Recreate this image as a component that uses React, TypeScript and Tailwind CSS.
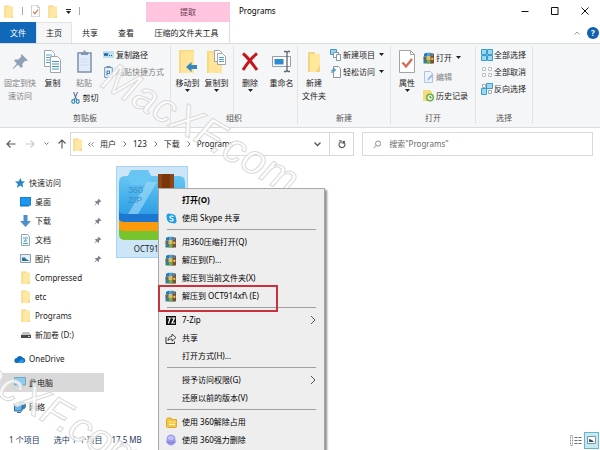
import React from "react";

const crumbs = ["用户", "123", "下载", "Programs"];

function Folder({ className = "w-[10px] h-[13px]" }: { className?: string }) {
  return (
    <svg viewBox="0 0 10 13" className={className} aria-hidden="true">
      <path d="M.5 0.500h5v1.200H9V13H.5z" fill="#f1d681" />
      <path d="M2 1.700h7V13H2z" fill="#ffe8a3" />
      <path d="M.5 0.500L2 1.700V13l-1.500-.8z" fill="#f9dd8c" />
      <path d="M9 9v4H6.500z" fill="#f6d987" />
    </svg>
  );
}

function Books() {
  return (
    <svg viewBox="0 0 12 12" className="w-3 h-3 shrink-0" aria-hidden="true">
      <path d="M1 2l3-1.200h4V4.500H1z" fill="#4aa3d6" />
      <path d="M1 2l3-1.200v3.700H1z" fill="#2d76ab" />
      <path d="M0.500 4.500h8V8h-8z" fill="#e3c04f" />
      <path d="M0.500 4.500h3V8h-3z" fill="#4a6a86" />
      <path d="M0.500 8h8v3.500h-8z" fill="#3c7f8c" />
      <path d="M4 8h4.500v3.500H4z" fill="#7fa84a" />
      <path d="M7.500 1l3.500.8v9.700H7.500z" fill="#77503a" />
      <path d="M8.500 1.200l1.300.3v2.500H8.500z" fill="#4aa3d6" />
      <path d="M8.300 5.800h2v2h-2z" fill="#f0cf63" />
    </svg>
  );
}

function Pin({ className = "w-2 h-2", color = "#7d868f" }: { className?: string; color?: string }) {
  return (
    <svg viewBox="0 0 16 16" className={className} aria-hidden="true">
      <path d="M9 1l6 6-1.6.6-1-.3-2.600 2.800.2 2.900-1.400 1-3-3L1 15l-.5-.5L4.500 10 2 7.300l1-1.200 3 .1L8.700 3.600 8.400 2.500z" fill={color} />
    </svg>
  );
}

function Arrow() {
  return (
    <svg viewBox="0 0 5 3" className="w-[5px] h-[3px] shrink-0" aria-hidden="true">
      <path d="M0 0h5L2.500 3z" fill="#222" />
    </svg>
  );
}

function CheckDoc({ className }: { className: string }) {
  return (
    <svg viewBox="0 0 16 23" className={className} aria-hidden="true">
      <path d="M.5.5h11l4 4v18H.5z" fill="#fff" stroke="#a3a3a3" />
      <path d="M11.500.5v4h4" fill="none" stroke="#a3a3a3" />
      <path d="M3.500 12.500l3.500 4L13 9" fill="none" stroke="#d8684f" strokeWidth="2.200" />
    </svg>
  );
}

function Group({ label, children }: { label: string; children: React.ReactNode }) {
  return (
    <section className="flex flex-col justify-between border-r border-[#e2e3e4] mt-[2px] mb-[3px]">
      <div className="flex">{children}</div>
      <h2 className="text-center leading-3 text-[#555]">{label}</h2>
    </section>
  );
}

function Big({
  icon,
  lines,
  arrow,
  muted,
  className = "w-[29px]",
}: {
  icon: React.ReactNode;
  lines: string[];
  arrow?: boolean;
  muted?: boolean;
  className?: string;
}) {
  return (
    <button className={`flex flex-col items-center ${muted ? "text-[#808080]" : ""} ${className}`}>
      <span className="flex h-[27px] items-center justify-center mt-[2px] mb-[1px]">{icon}</span>
      {lines.map((l) => (
        <span key={l} className="leading-[13px] whitespace-nowrap">{l}</span>
      ))}
      {arrow && <Arrow />}
    </button>
  );
}

function Small({
  icon,
  text,
  arrow,
  muted,
}: {
  icon: React.ReactNode;
  text: string;
  arrow?: boolean;
  muted?: boolean;
}) {
  return (
    <button className={`flex items-center gap-[2px] h-[17px] whitespace-nowrap ${muted ? "text-[#808080]" : ""}`}>
      <span className="flex w-[11px] justify-center">{icon}</span>
      {text}
      {arrow && <span className="ml-[2px]"><Arrow /></span>}
    </button>
  );
}

function Side({
  icon,
  text,
  pin,
  level = 1,
  active,
}: {
  icon: React.ReactNode;
  text: string;
  pin?: boolean;
  level?: number;
  active?: boolean;
}) {
  return (
    <a
      href="#"
      className={`flex items-center gap-1 h-[19px] w-[104px] pr-[2px] ${level === 1 ? "pl-[14px]" : "pl-5"} ${active ? "bg-[#d9d9d9]" : ""}`}
    >
      <span className="flex w-[11px] justify-center">{icon}</span>
      <span className="grow">{text}</span>
      {pin && <Pin />}
    </a>
  );
}

function Item({
  icon,
  text,
  sub,
  bold,
  boxed,
}: {
  icon?: React.ReactNode;
  text: string;
  sub?: boolean;
  bold?: boolean;
  boxed?: boolean;
}) {
  return (
    <button role="menuitem" className={`relative flex items-center w-full h-[18px] pl-[6px] pr-2 text-left text-black ${bold ? "font-bold" : ""}`}>
      <span className="flex w-3 mr-[5px] justify-center">{icon}</span>
      <span className="grow">{text}</span>
      {sub && (
        <svg viewBox="0 0 6 10" className="w-[6px] h-[10px]" aria-hidden="true">
          <path d="M1 1l4 4-4 4" fill="none" stroke="#555" />
        </svg>
      )}
      {boxed && <span className="absolute -left-px -top-[2px] w-[120px] h-[27px] border-2 border-[#c8323c]" />}
    </button>
  );
}

function Line() {
  return <hr className="mx-2 my-[2px] border-t border-[#a0a0a0] h-[2px]" />;
}

function Watermark({ className }: { className: string }) {
  return (
    <div
      aria-hidden="true"
      className={`absolute pointer-events-none origin-left rotate-[30deg] font-['Liberation_Sans'] italic text-[42px] leading-none text-white/80 [-webkit-text-stroke:1px_#dadada] ${className}`}
    >
      MacXF.com
    </div>
  );
}

export default function App() {
  return (
    <div className="relative flex flex-col h-screen overflow-hidden bg-white text-[8px] leading-3 text-[#222] font-['Noto_Sans','Noto_Sans_CJK_SC',sans-serif]">
      <header className="flex h-[22px] shrink-0">
        <div className="flex items-center w-[146px] pl-1 gap-2">
          <Folder />
          <span className="w-px h-2 bg-[#aaa]" />
          <CheckDoc className="w-[9px] h-3" />
          <Folder />
          <span className="flex flex-col items-center gap-px">
            <span className="w-[5px] h-px bg-[#222]" />
            <Arrow />
          </span>
          <span className="w-px h-2 bg-[#aaa]" />
        </div>
        <div className="w-[84px] mt-[2px] pt-1 text-center bg-[#ffc5de] text-[#6d3550]">提取</div>
        <h1 className="grow pl-[9px] pt-[5px] text-black">Programs</h1>
        <div className="flex items-center gap-[22px] pr-[11px]">
          <button aria-label="最小化">
            <svg viewBox="0 0 8 8" className="w-2 h-2"><path d="M.5 4.500h7" stroke="#111" /></svg>
          </button>
          <button aria-label="最大化">
            <svg viewBox="0 0 8 8" className="w-2 h-2"><path d="M.5.5h6.500v7H.5z" fill="none" stroke="#111" /></svg>
          </button>
          <button aria-label="关闭">
            <svg viewBox="0 0 8 8" className="w-2 h-2"><path d="M.5.5l7 7M7.500.5l-7 7" stroke="#111" /></svg>
          </button>
        </div>
      </header>

      <nav className="flex h-[21px] shrink-0 items-stretch text-center">
        <button className="w-9 bg-[#1168b8] text-white">文件</button>
        <button className="w-9 bg-[#f5f6f7] border border-b-0 border-[#e2e3e4]">主页</button>
        <button className="w-9">共享</button>
        <button className="w-9">查看</button>
        <button className="w-[86px] border-r border-[#e8d5dd]">压缩的文件夹工具</button>
        <div className="flex grow items-center justify-end gap-[7px] pr-[1px]">
          <svg viewBox="0 0 6 4" className="w-[6px] h-1" aria-hidden="true">
            <path d="M.5 3.500L3 1l2.500 2.500" fill="none" stroke="#999" />
          </svg>
          <button aria-label="帮助" className="w-3 h-3 rounded-full bg-[#1061b0] text-white font-bold leading-3">?</button>
        </div>
      </nav>

      <div className="flex h-[85px] shrink-0 bg-[#f5f6f7] border-y border-[#dadbdc]">
        <Group label="剪贴板">
          <Big muted className="w-9 ml-[2px]" lines={["固定到快", "速访问"]} icon={<Pin className="w-[17px] h-[19px]" color="#8fa0b8" />} />
          <Big
            lines={["复制"]}
            icon={
              <svg viewBox="0 0 17 23" className="w-[17px] h-[23px]">
                <path d="M.5.5h7l3 3v13H.5z" fill="#fff" stroke="#9aa5ae" />
                <path d="M2 5h6M2 7.500h7M2 10h7M2 12.500h7" stroke="#58a7cc" />
                <path d="M6.500 6.500h7l3 3v13h-10z" fill="#fff" stroke="#9aa5ae" />
                <path d="M8 11.500h7M8 14h7M8 16.500h7M8 19h7" stroke="#3f95c2" />
              </svg>
            }
          />
          <div className="flex flex-col items-center w-[34px]">
            <Big
              muted
              lines={["粘贴"]}
              icon={
                <svg viewBox="0 0 15 23" className="w-[15px] h-[23px]">
                  <path d="M1 3h13v19H1z" fill="#e1ebfa" stroke="#7a93b3" strokeWidth="1.500" />
                  <path d="M4 2h2.500V.5h2V2H11v3H4z" fill="#8296af" />
                  <path d="M3.500 9h8M3.500 12h8M3.500 15h8" stroke="#cddcf0" />
                </svg>
              }
            />
            <Small
              text="剪切"
              icon={
                <svg viewBox="0 0 9 12" className="w-[9px] h-3">
                  <path d="M2.500 0l3.200 8M6.500 0L3.300 8" stroke="#60788e" strokeWidth="1.100" />
                  <ellipse cx="2.300" cy="9.500" rx="1.500" ry="1.800" fill="none" stroke="#2b88bd" strokeWidth="1.200" />
                  <ellipse cx="6.700" cy="9.500" rx="1.500" ry="1.800" fill="none" stroke="#2b88bd" strokeWidth="1.200" />
                </svg>
              }
            />
          </div>
          <div className="flex flex-col pl-[2px] pr-[6px]">
            <Small
              text="复制路径"
              icon={
                <svg viewBox="0 0 11 7" className="w-[11px] h-[7px]">
                  <path d="M0 0h11v7H0z" fill="#bfe0f2" />
                  <path d="M1 2l1 3 1-3 1 3 1-3" fill="none" stroke="#19679b" />
                  <path d="M6 4.500h1M8 4.500h1" stroke="#19679b" />
                </svg>
              }
            />
            <Small
              muted
              text="粘贴快捷方式"
              icon={
                <svg viewBox="0 0 9 12" className="w-[9px] h-3">
                  <path d="M.7 1.500h7.600v10H.7z" fill="#e8f1fa" stroke="#7195b8" />
                  <path d="M2.500 0h4v2h-4z" fill="#7195b8" />
                  <path d="M3 9.500V5h2.500v2.500H3" fill="none" stroke="#3d7fb4" />
                </svg>
              }
            />
          </div>
        </Group>

        <Group label="组织">
          <Big
            arrow
            className="w-[29px] ml-[2px]"
            lines={["移动到"]}
            icon={
              <svg viewBox="0 0 19 23" className="w-[19px] h-[23px]">
                <path d="M1 0h15v23H1z" fill="#f6da80" />
                <path d="M3 1.500h13V23H3z" fill="#ffe49a" />
                <path d="M8 17l5.500-5v3H19v4h-5.500v3z" fill="#3487bf" />
              </svg>
            }
          />
          <Big
            arrow
            lines={["复制到"]}
            icon={
              <svg viewBox="0 0 19 23" className="w-[19px] h-[23px]">
                <path d="M0 1h15v22H0z" fill="#f6da80" />
                <path d="M2 2.500h13V23H2z" fill="#ffe49a" />
                <path d="M7.500.5h5l2 2v9h-7z" fill="#fff" stroke="#9aa5ae" />
                <path d="M10.500 3.500h5l3 3v8h-8z" fill="#fff" stroke="#9aa5ae" />
                <path d="M12 7.500h5M12 9.500h5M12 11.500h5" stroke="#4b9dca" />
              </svg>
            }
          />
          <span className="w-px h-[74px] -mb-4 ml-[2px] bg-[#e2e3e4]" />
          <Big
            arrow
            className="w-8"
            lines={["删除"]}
            icon={
              <svg viewBox="0 0 18 20" className="w-[18px] h-5">
                <path d="M2 1.500c5 4 9 9.500 14 16.500M16 1.500C10 6 6 11.500 2 18" fill="none" stroke="#c4161c" strokeWidth="3" />
              </svg>
            }
          />
          <Big
            className="w-[31px]"
            lines={["重命名"]}
            icon={
              <svg viewBox="0 0 19 23" className="w-[19px] h-[23px]">
                <path d="M.5 6.500h18v10H.5z" fill="#fff" stroke="#8fa0ad" />
                <path d="M2.500 9h9v5.500h-9z" fill="#2f8bd0" />
                <path d="M12 1.500h2l1 1 1-1h2M15 2.500v18M12 21.500h2l1-1 1 1h2" fill="none" stroke="#5a6670" strokeWidth="1.300" />
              </svg>
            }
          />
        </Group>

        <Group label="新建">
          <Big
            className="w-8"
            lines={["新建", "文件夹"]}
            icon={
              <svg viewBox="0 0 12 20" className="w-3 h-5">
                <path d="M0 0h7v2h5v18H0z" fill="#f1d681" />
                <path d="M2 2h10v18H2z" fill="#ffe79c" />
                <path d="M8 20l4-7v7z" fill="#f3d37a" />
              </svg>
            }
          />
          <div className="flex flex-col pr-[6px]">
            <Small
              arrow
              text="新建项目"
              icon={
                <svg viewBox="0 0 11 12" className="w-[11px] h-3">
                  <path d="M.5.5h6v5h-6z" fill="#9bd0ee" stroke="#4694c0" />
                  <path d="M3.500 3.500h5v5h-5z" fill="#fff" stroke="#7d97a8" />
                  <path d="M6.500 5.500h4v6h-4z" fill="#fff" stroke="#8795a0" />
                </svg>
              }
            />
            <Small
              arrow
              text="轻松访问"
              icon={
                <svg viewBox="0 0 10 12" className="w-[10px] h-3">
                  <path d="M2.500.5h5l2 2v9h-7z" fill="#fff" stroke="#8795a0" />
                  <path d="M1 7V4h3M3 2.500L4.700 4 3 5.500" fill="none" stroke="#2f86bd" />
                </svg>
              }
            />
          </div>
        </Group>

        <Group label="打开">
          <Big arrow className="w-8" lines={["属性"]} icon={<CheckDoc className="w-4 h-[23px]" />} />
          <div className="flex flex-col gap-[2px] pt-[3px] pr-[7px]">
            <Small arrow text="打开" icon={<Books />} />
            <Small
              muted
              text="编辑"
              icon={
                <svg viewBox="0 0 10 12" className="w-[10px] h-3">
                  <path d="M.5.5h6l2 2v9h-8z" fill="#edf4fb" stroke="#b3c3d3" />
                  <path d="M3 10l1-3 4-4 1.500 1.500-4 4z" fill="#9dbede" />
                </svg>
              }
            />
            <Small
              text="历史记录"
              icon={
                <svg viewBox="0 0 11 12" className="w-[11px] h-3">
                  <path d="M0 0h7l2 2v9H0z" fill="#f3dc7c" />
                  <circle cx="7" cy="7.500" r="4" fill="#6dae45" />
                  <circle cx="7" cy="7.500" r="2.500" fill="#eef7e6" />
                  <path d="M7 6v1.700h1.500" fill="none" stroke="#3b7a22" />
                </svg>
              }
            />
          </div>
        </Group>

        <Group label="选择">
          <div className="flex flex-col pl-[5px] pr-[6px]">
            <Small
              text="全部选择"
              icon={
                <svg viewBox="0 0 12 12" className="w-3 h-3 shrink-0">
                  <path d="M.5.5h5v5h-5zM6.500.5h5v5h-5zM.5 6.500h5v5h-5zM6.500 6.500h5v5h-5z" fill="#9ad8f4" stroke="#3b9dcb" />
                </svg>
              }
            />
            <Small
              text="全部取消"
              icon={
                <svg viewBox="0 0 12 12" className="w-3 h-3 shrink-0">
                  <path d="M1.500 1.500h3v3h-3zM7.500 1.500h3v3h-3zM1.500 7.500h3v3h-3zM7.500 7.500h3v3h-3z" fill="#fff" stroke="#a5adb3" strokeDasharray="2 1" />
                </svg>
              }
            />
            <Small
              text="反向选择"
              icon={
                <svg viewBox="0 0 12 12" className="w-3 h-3 shrink-0">
                  <path d="M1.500 1.500h3v3h-3zM7.500 7.500h3v3h-3z" fill="#fff" stroke="#a5adb3" />
                  <path d="M5.500.5h6v5h-6zM.5 5.500h5v6h-5z" fill="#9ad8f4" stroke="#3b9dcb" />
                </svg>
              }
            />
          </div>
        </Group>
      </div>

      <div className="flex shrink-0 items-center pt-1 pb-2 pr-[7px] pl-[6px]">
        <div className="flex items-center gap-[9px] w-16">
          <button aria-label="后退">
            <svg viewBox="0 0 10 8" className="w-[10px] h-2"><path d="M4.500.5L1 4l3.500 3.500M1 4h8.500" fill="none" stroke="#555" strokeWidth="1.100" /></svg>
          </button>
          <button aria-label="前进">
            <svg viewBox="0 0 10 8" className="w-[10px] h-2"><path d="M5.500.5L9 4 5.500 7.500M9 4H.5" fill="none" stroke="#ccc" strokeWidth="1.200" /></svg>
          </button>
          <button aria-label="最近">
            <svg viewBox="0 0 5 4" className="w-[5px] h-1"><path d="M.5.5l2 2 2-2" fill="none" stroke="#777" /></svg>
          </button>
          <button aria-label="上移">
            <svg viewBox="0 0 8 10" className="w-2 h-[10px]"><path d="M.5 4.500L4 1l3.500 3.500M4 1v8.500" fill="none" stroke="#555" strokeWidth="1.100" /></svg>
          </button>
        </div>
        <div className="flex items-center h-6 basis-[284px] grow border border-[#d9d9d9] pl-[2px]">
          <Folder />
          <svg viewBox="0 0 6 5" className="w-[6px] h-[5px] ml-[5px]" aria-hidden="true">
            <path d="M2.500.5l-2 2 2 2M5.500.5l-2 2 2 2" fill="none" stroke="#666" strokeWidth=".8" />
          </svg>
          {crumbs.map((c, i) => (
            <span key={c} className="flex items-center">
              {i > 0 && (
                <svg viewBox="0 0 4 6" className="w-1 h-[6px] ml-[7px]" aria-hidden="true">
                  <path d="M.5.5L3 3 .5 5.500" fill="none" stroke="#777" />
                </svg>
              )}
              <a href="#" className="ml-[6px]">{c}</a>
            </span>
          ))}
          <span className="grow" />
          <button aria-label="历史" className="px-2">
            <svg viewBox="0 0 7 5" className="w-[7px] h-[5px]"><path d="M.5.5l3 3 3-3" fill="none" stroke="#555" strokeWidth="1.300" /></svg>
          </button>
          <button aria-label="刷新" className="flex items-center justify-center w-6 h-full border-l border-[#d9d9d9]">
            <svg viewBox="0 0 8 9" className="w-2 h-[9px]">
              <path d="M2 2.300a3 3 0 1 0 3.500-.3M1 .8h2v2.500M5 4V1.500h2" fill="none" stroke="#555" strokeWidth="1.100" />
            </svg>
          </button>
        </div>
        <label className="flex items-center h-6 basis-[231px] grow ml-2 pl-[10px] gap-2 border border-[#d9d9d9]">
          <svg viewBox="0 0 9 9" className="w-[9px] h-[9px]" aria-hidden="true">
            <circle cx="5.500" cy="3.500" r="2.800" fill="none" stroke="#888" />
            <path d="M3.500 5.500L.5 8.500" stroke="#888" />
          </svg>
          <input aria-label="搜索" className="w-full outline-none placeholder:text-[#6b6b6b]" placeholder={'搜索"Programs"'} />
        </label>
      </div>

      <main className="flex grow min-h-0">
        <nav className="w-[116px] shrink-0 pt-[9px]">
          <Side
            text="快速访问"
            icon={
              <svg viewBox="0 0 10 10" className="w-[10px] h-[10px]">
                <path d="M5.500 0l1.200 3.300 3.300.3-2.500 2.200.7 3.700L5.300 7.600 2 10l.8-3.900L0 3.600l3.700-.3z" fill="#2a86c6" />
              </svg>
            }
          />
          <Side
            level={2}
            pin
            text="桌面"
            icon={
              <svg viewBox="0 0 11 10" className="w-[11px] h-[10px]">
                <path d="M0 0h11v8.500H9.500L9 9.500H0z" fill="#1979cf" />
                <path d="M.8.8h9.400v7H.8z" fill="#1b98f0" />
              </svg>
            }
          />
          <Side
            level={2}
            pin
            text="下载"
            icon={
              <svg viewBox="0 0 11 12" className="w-[11px] h-3"><path d="M3.500 0h4v6H11l-5.500 6L0 6h3.500z" fill="#4a8fc8" /></svg>
            }
          />
          <Side
            level={2}
            pin
            text="文档"
            icon={
              <svg viewBox="0 0 9 12" className="w-[9px] h-3">
                <path d="M.5.5h6l2 2v9h-8z" fill="#f3f9fc" stroke="#92a6b3" />
                <path d="M2 4h5M2 9.500h5M3 8l2-3M5 8V6" stroke="#4d9cc5" />
              </svg>
            }
          />
          <Side
            level={2}
            pin
            text="图片"
            icon={
              <svg viewBox="0 0 11 9" className="w-[11px] h-[9px]">
                <path d="M.5.5h10v8H.5z" fill="#e2f2fb" stroke="#8da0ae" />
                <path d="M2 3.500h3l1 1.500 3.500 2H2z" fill="#336d93" />
              </svg>
            }
          />
          <Side level={2} text="Compressed" icon={<Folder />} />
          <Side level={2} text="etc" icon={<Folder />} />
          <Side level={2} text="Programs" icon={<Folder />} />
          <Side
            level={2}
            text="新加卷 (D:)"
            icon={
              <svg viewBox="0 0 10 6" className="w-[10px] h-[6px]">
                <path d="M2 0h6l2 3H0z" fill="#c4c4c4" />
                <path d="M0 3h10v3H0z" fill="#4b4b4b" />
                <path d="M7 4.500h2" stroke="#9fe39f" />
              </svg>
            }
          />
          <div className="flex flex-col gap-[5px] mt-[5px]">
            <Side
              text="OneDrive"
              icon={
                <svg viewBox="0 0 12 8" className="w-3 h-2 shrink-0">
                  <path d="M3 8a2.500 2.500 0 0 1-.3-5A3.500 3.500 0 0 1 9 2.800 2.700 2.700 0 0 1 9.500 8z" fill="#0f6cbd" />
                  <path d="M3 8l5-4a2.700 2.700 0 0 1 1.500 4z" fill="#2a9ae6" />
                </svg>
              }
            />
            <Side
              active
              text="此电脑"
              icon={
                <svg viewBox="0 0 12 11" className="w-3 h-[11px] shrink-0">
                  <path d="M.5.5h11v7.500H.5z" fill="#8ccbee" stroke="#76a7c2" />
                  <path d="M4 10h5" stroke="#5b88a3" strokeWidth="1.500" />
                </svg>
              }
            />
            <Side
              text="网络"
              icon={
                <svg viewBox="0 0 12 12" className="w-3 h-3 shrink-0">
                  <circle cx="8" cy="4.500" r="4" fill="#357fb6" />
                  <path d="M.5 4h7.500v6H.5z" fill="#65b5e8" stroke="#2f6d9f" />
                  <path d="M3 11.500h4" stroke="#2f6d9f" />
                </svg>
              }
            />
          </div>
        </nav>

        <section className="grow pt-[2px]">
          <figure className="flex flex-col items-center w-[72px] h-[92px] pt-[3px] bg-[#cde6f7] border border-[#a6d4f2]">
            <svg viewBox="0 0 66 70" className="w-[66px] h-[70px]" aria-hidden="true">
              <defs>
                <linearGradient id="lid" x1="0" y1="0" x2="0" y2="1">
                  <stop offset="0" stopColor="#6fcdf6" />
                  <stop offset="1" stopColor="#2f9fe6" />
                </linearGradient>
              </defs>
              <path d="M0 56h66v9a5 5 0 0 1-5 5H5a5 5 0 0 1-5-5z" fill="#77c52e" />
              <path d="M0 50h66v9q-2 2-5 2H5q-3 0-5-2z" fill="#fb9a0c" />
              <path d="M0 40h66v10q-2 2-5 2H5q-3 0-5-2z" fill="#1b77cf" />
              <path d="M0 12q0-6 6-6h3l3-6h17l3 6h28q6 0 6 6v28q0 4-5 4H5q-5 0-5-4z" fill="url(#lid)" />
              <path d="M9 6l3-6h17l3 6v5l-3 4H12l-3-4z" fill="#69c6f3" />
              <path d="M28 12h10L19 44H9z" fill="#a7def8" opacity=".6" />
              <path d="M39 4h16v66H39z" fill="#8e4517" />
              <path d="M43 4h8v66h-8z" fill="#7a3508" />
              <text x="9" y="23" fontSize="9" fontFamily="Liberation Sans" fill="#3a8fc4">360</text>
              <text x="9" y="33" fontSize="9" fontFamily="Liberation Sans" fill="#3a8fc4">ZIP</text>
            </svg>
            <figcaption className="pt-[3px]">OCT914xf</figcaption>
          </figure>
        </section>
      </main>

      <footer className="flex h-5 shrink-0 items-center pl-[9px] pr-px text-[#1e395b]">
        <span>1 个项目</span>
        <span className="ml-[14px]">选中 1 个项目</span>
        <span className="ml-[9px] grow">17.5 MB</span>
        <button aria-label="详细信息" className="mr-[2px]">
          <svg viewBox="0 0 12 11" className="w-3 h-[11px]">
            <path d="M.5.5h2v10h-2z" fill="none" stroke="#999" strokeDasharray="2 1" />
            <path d="M4.500 2.500h7M4.500 5.500h7M4.500 8.500h7" stroke="#666" strokeDasharray="3 1" />
          </svg>
        </button>
        <button aria-label="大图标" className="flex items-center justify-center w-[15px] h-[17px] border border-[#69b5cc] bg-[#c5e9f4]">
          <svg viewBox="0 0 9 8" className="w-[9px] h-2">
            <path d="M.5.5h8v7h-8z" fill="#fff" stroke="#7e97a4" />
            <path d="M2 3l3 1 2 2H2z" fill="#33536b" />
          </svg>
        </button>
      </footer>

      <Watermark className="left-[106px] top-[53px]" />
      <Watermark className="-left-[48px] top-[332px]" />

      <div role="menu" className="absolute left-[158px] top-[188px] w-[167px] h-[290px] pt-[2px] bg-[#eeeeee] border border-[#a8a8a8] shadow-[2px_2px_2px_rgba(0,0,0,0.45)]">
        <Item bold text="打开(O)" />
        <Item
          text="使用 Skype 共享"
          icon={
            <svg viewBox="0 0 12 12" className="w-[11px] h-[11px]">
              <circle cx="6" cy="6" r="5" fill="#1d9fe0" />
              <circle cx="3.500" cy="3.500" r="3" fill="#1d9fe0" />
              <circle cx="8.500" cy="8.500" r="3" fill="#1d9fe0" />
              <path d="M8 4.200C7 2.700 4.200 3 4.200 4.600S8 5.800 8 7.500 5 9.200 4 7.600" fill="none" stroke="#fff" strokeWidth="1.200" />
            </svg>
          }
        />
        <Line />
        <Item text="用360压缩打开(Q)" icon={<Books />} />
        <Item text="解压到(F)..." icon={<Books />} />
        <Item text="解压到当前文件夹(X)" icon={<Books />} />
        <Item text="解压到 OCT914xf\ (E)" icon={<Books />} boxed />
        <Line />
        <Item
          sub
          text="7-Zip"
          icon={
            <svg viewBox="0 0 10 9" className="w-[10px] h-[9px]">
              <path d="M0 0h10v9H0z" fill="#111" />
              <path d="M1.500 2h2.500L2.500 7.500M5.500 2h3l-2.500 5h3" fill="none" stroke="#fff" strokeWidth="1.200" />
            </svg>
          }
        />
        <Item
          text="共享"
          icon={
            <svg viewBox="0 0 12 11" className="w-3 h-[11px]">
              <path d="M1 4v6.500h8.500V8.500" fill="none" stroke="#333" />
              <path d="M3 7.500C3 5 4.500 3.500 7 3.300V1l4 3.700-4 3.500V6C5.500 6 4 6.300 3 7.500z" fill="none" stroke="#333" strokeWidth=".9" />
            </svg>
          }
        />
        <Item text="打开方式(H)..." />
        <Line />
        <Item sub text="授予访问权限(G)" />
        <Item text="还原以前的版本(V)" />
        <Line />
        <Item
          text="使用 360解除占用"
          icon={
            <svg viewBox="0 0 11 11" className="w-[11px] h-[11px]">
              <path d="M.5 2.500q0-1.500 1.500-1.500h3l1 1.500h4.500v7q0 1-1 1h-8q-1 0-1-1z" fill="#f5c945" stroke="#dda729" />
              <path d="M3 5h2.500M7 5h2M3 7.500h6" stroke="#fff6c8" strokeWidth="1.200" />
            </svg>
          }
        />
        <Item
          text="使用 360强力删除"
          icon={
            <svg viewBox="0 0 10 12" className="w-[10px] h-3">
              <path d="M1 2.500Q5-1.500 9 2.500l.7 5Q8 11.500 5 11.500T.3 7.500z" fill="#9d99ee" />
              <ellipse cx="5" cy="4" rx="3" ry="2" fill="#c3c1f8" />
              <path d="M.5 8q4.500 2 9 0" fill="none" stroke="#7c78d6" />
            </svg>
          }
        />
      </div>
    </div>
  );
}
